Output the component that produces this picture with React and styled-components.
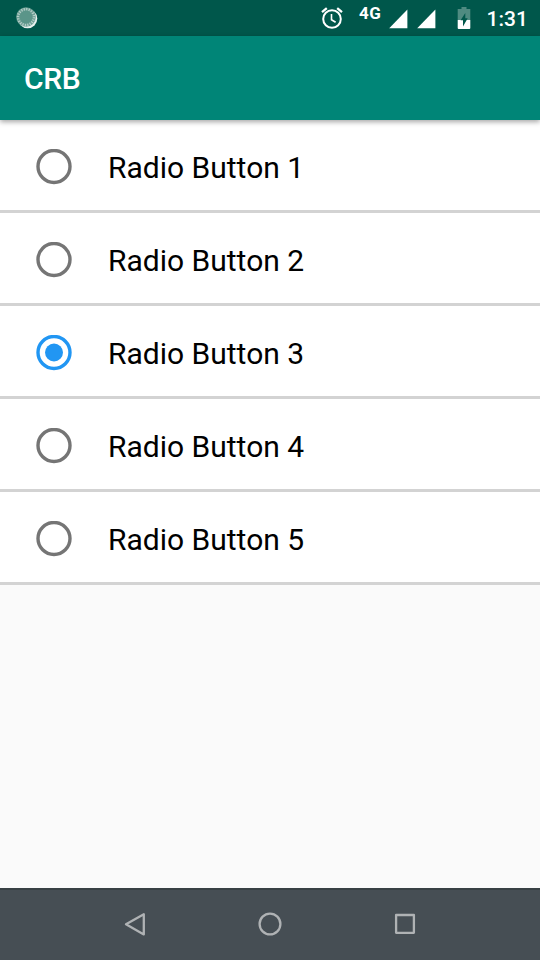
import React, { useState } from "react";
import styled, { createGlobalStyle } from "styled-components";

const GlobalStyle = createGlobalStyle`
  * { box-sizing: border-box; }
  body { margin: 0; font-family: Roboto, sans-serif; background: #fafafa; }
`;

const Screen = styled.div`
  display: flex;
  flex-direction: column;
  width: 540px;
  height: 960px;
  overflow: hidden;
  background: #fafafa;
`;

const StatusBar = styled.div`
  display: flex;
  flex: none;
  height: 36px;
  padding: 0 14px 0 15px;
  background: #00574b;
  color: #fff;
`;

const StatusIcon = styled.svg`
  flex: none;
  display: block;
  width: ${(p) => p.$width}px;
  height: 36px;
  margin-left: ${(p) => p.$gap || 0}px;
`;

const Spacer = styled.div`
  flex: 1;
`;

const Network = styled.span`
  width: 30px;
  margin-left: 15px;
  padding-top: 4px;
  font-size: 17px;
  line-height: 19px;
  font-weight: 700;
  letter-spacing: 0.4px;
`;

const Clock = styled.span`
  width: 39.5px;
  margin-left: 15.5px;
  font-size: 21px;
  line-height: 38px;
  font-weight: 500;
  white-space: nowrap;
`;

const AppBar = styled.header`
  flex: none;
  position: relative;
  display: flex;
  align-items: center;
  height: 84px;
  padding: 2px 24px 0;
  background: #008577;
  color: #fff;
  box-shadow: 0 2px 5px rgba(0, 0, 0, 0.35);
`;

const Title = styled.h1`
  margin: 0;
  font-size: 30px;
  line-height: 36px;
  font-weight: 500;
  letter-spacing: -0.3px;
`;

const List = styled.main`
  flex: 1;
`;

const Row = styled.label`
  display: flex;
  align-items: center;
  height: 93px;
  padding: 3px 36px 0;
  border-bottom: 3px solid #d3d3d3;
  background: #fff;
`;

const HiddenInput = styled.input`
  appearance: none;
  width: 0;
  height: 0;
  margin: 0;
`;

const RadioMark = styled.svg`
  flex: none;
  width: 36px;
  height: 36px;
  color: ${(p) => (p.$checked ? "#2196f3" : "#757575")};
`;

const Label = styled.span`
  margin-left: 36px;
  padding-top: 2px;
  color: #000;
  font-size: 30px;
  line-height: 36px;
`;

const NavBar = styled.nav`
  flex: none;
  display: flex;
  justify-content: center;
  height: 72px;
  border-top: 2px solid #384044;
  background: #464e54;
`;

const NavButton = styled.button`
  display: flex;
  align-items: center;
  justify-content: center;
  width: 135px;
  padding: 0;
  border: 0;
  background: none;
  color: #afb2b4;
`;

const NavIcon = styled.svg`
  width: 28px;
  height: 28px;
  fill: none;
  stroke: currentColor;
  stroke-width: 2.3;
  stroke-linejoin: round;
`;

const options = [1, 2, 3, 4, 5];

function SyncIcon() {
  return (
    <StatusIcon $width={24} viewBox="0 0 24 36">
      <circle cx="12.6" cy="18.6" r="9.7" fill="#e9f1ef" />
      <circle cx="11" cy="17" r="9.8" fill="#6fa096" />
      <circle cx="11" cy="17.2" r="7.9" fill="none" stroke="#b9d0cb" strokeWidth="2.6" strokeDasharray="1.1 1.38" />
      <circle cx="11" cy="17" r="6.5" fill="#5b9589" />
    </StatusIcon>
  );
}

function AlarmIcon() {
  return (
    <StatusIcon $width={24} viewBox="0 0 24 36" fill="none" stroke="#fff" strokeWidth="2">
      <circle cx="12" cy="19" r="8.8" />
      <path d="M2 12.2 6.8 8.2M17.2 8.2 22 12.2" strokeWidth="2.3" />
      <path d="M11.5 14v5.7l4.1 2.5" strokeWidth="1.6" />
    </StatusIcon>
  );
}

function SignalIcon({ gap }) {
  return (
    <StatusIcon $width={19} $gap={gap} viewBox="0 0 19 36">
      <path d="M18.4 9.6v18.6H0.2z" fill="#fff" />
    </StatusIcon>
  );
}

function BatteryIcon() {
  return (
    <StatusIcon $width={14} $gap={21} viewBox="0 0 14 36">
      <path d="M4.5 7h5v2h3.8v11H.7V9h3.8z" fill="#4f8b81" />
      <path d="M.7 20h12.6v8q0 1-1 1H1.7q-1 0-1-1z" fill="#fff" />
      <path d="M8.3 13v5.3h2.4L6 26.5V20.3H3.6z" fill="#00574b" />
    </StatusIcon>
  );
}

export default function App() {
  const [selected, setSelected] = useState(3);

  return (
    <>
      <GlobalStyle />
      <Screen>
        <StatusBar>
          <SyncIcon />
          <Spacer />
          <AlarmIcon />
          <Network>4G</Network>
          <SignalIcon />
          <SignalIcon gap={9} />
          <BatteryIcon />
          <Clock>1:31</Clock>
        </StatusBar>
        <AppBar>
          <Title>CRB</Title>
        </AppBar>
        <List>
          {options.map((n) => (
            <Row key={n}>
              <HiddenInput type="radio" name="option" checked={selected === n} onChange={() => setSelected(n)} />
              <RadioMark $checked={selected === n} viewBox="0 0 36 36">
                <circle cx="18" cy="17.5" r="16" fill="none" stroke="currentColor" strokeWidth="3.4" />
                {selected === n && <circle cx="18" cy="17.5" r="9" fill="currentColor" />}
              </RadioMark>
              <Label>Radio Button {n}</Label>
            </Row>
          ))}
        </List>
        <NavBar>
          <NavButton aria-label="Back">
            <NavIcon viewBox="0 0 28 28">
              <path d="M22.8 3.2v20.2L5 13.2z" />
            </NavIcon>
          </NavButton>
          <NavButton aria-label="Home">
            <NavIcon viewBox="0 0 28 28">
              <circle cx="14" cy="13" r="10.4" />
            </NavIcon>
          </NavButton>
          <NavButton aria-label="Recent apps">
            <NavIcon viewBox="0 0 28 28">
              <rect x="5.1" y="4" width="17.8" height="17.8" />
            </NavIcon>
          </NavButton>
        </NavBar>
      </Screen>
    </>
  );
}
